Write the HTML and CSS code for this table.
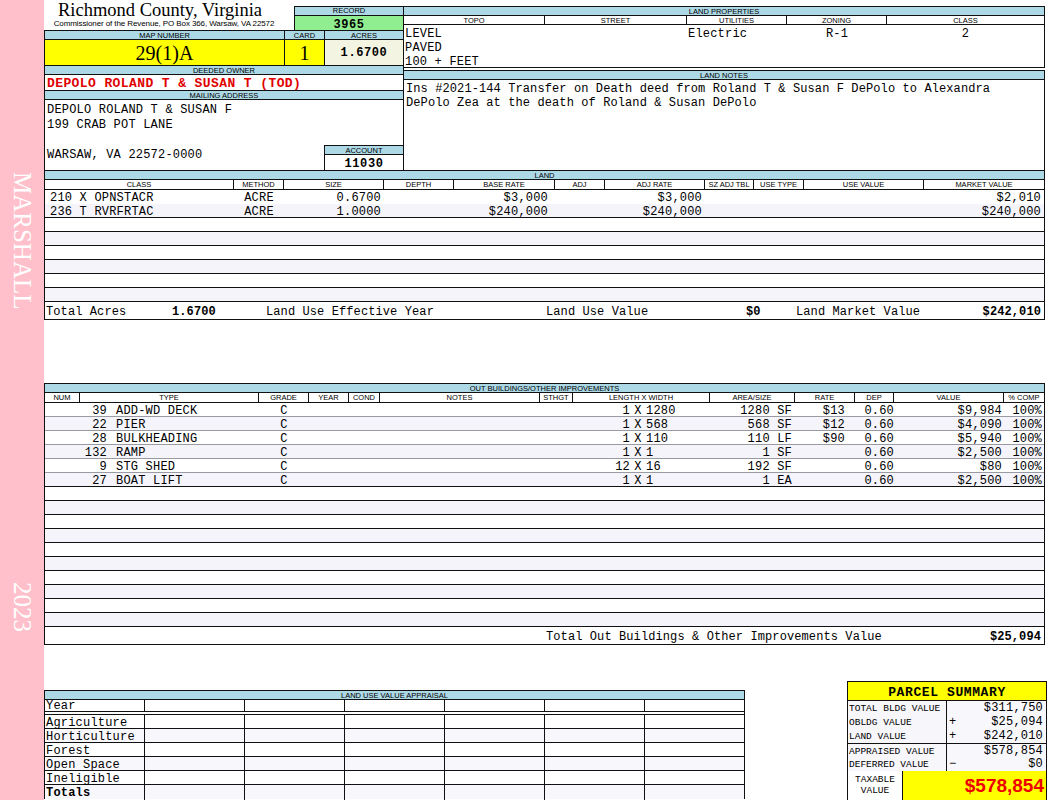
FILE: index.html
```html
<!DOCTYPE html>
<html>
<head>
<meta charset="utf-8">
<title>Richmond County, Virginia - Property Record</title>
<link rel="stylesheet" href="styles.css">
</head>
<body>
<div class="page">
  <aside class="side"><span class="side-name">MARSHALL</span><span class="side-year">2023</span></aside>
  <main class="main">
    <section class="top">
      <div class="tl">
        <div class="head">
          <div class="title-block">
            <div class="title">Richmond County, Virginia</div>
            <div class="subtitle">Commissioner of the Revenue, PO Box 366, Warsaw, VA 22572</div>
          </div>
          <div class="record">
            <div class="hdr">RECORD</div>
            <div class="record-val">3965</div>
          </div>
        </div>
        <div class="idgrid">
          <div class="hcell">MAP NUMBER</div>
          <div class="hcell">CARD</div>
          <div class="hcell last">ACRES</div>
          <div class="vcell mapnum">29(1)A</div>
          <div class="vcell card">1</div>
          <div class="vcell acres last">1.6700</div>
        </div>
        <div class="hdr boxed">DEEDED OWNER</div>
        <div class="owner">DEPOLO ROLAND T &amp; SUSAN T (TOD)</div>
        <div class="hdr boxed">MAILING ADDRESS</div>
        <div class="mail">
          <div class="mail-lines">DEPOLO ROLAND T &amp; SUSAN F<br>199 CRAB POT LANE<br>&nbsp;<br>WARSAW, VA 22572-0000</div>
          <div class="account">
            <div class="hdr">ACCOUNT</div>
            <div class="acct-val">11030</div>
          </div>
        </div>
      </div>
      <div class="tr">
        <div class="props">
          <div class="hdr">LAND PROPERTIES</div>
          <div class="pgrid pgrid-h"><span>TOPO</span><span>STREET</span><span>UTILITIES</span><span>ZONING</span><span>CLASS</span></div>
          <div class="pgrid pgrid-b"><span>LEVEL<br>PAVED<br>100 + FEET</span><span></span><span>Electric</span><span class="ctr">R-1</span><span class="ctr">2</span></div>
        </div>
        <div class="notes">
          <div class="hdr">LAND NOTES</div>
          <div class="notes-body">Ins #2021-144 Transfer on Death deed from Roland T &amp; Susan F DePolo to Alexandra DePolo Zea at the death of Roland &amp; Susan DePolo</div>
        </div>
      </div>
    </section>

    <section class="land">
      <div class="hdr">LAND</div>
      <div class="lgrid colh"><span>CLASS</span><span>METHOD</span><span>SIZE</span><span>DEPTH</span><span>BASE RATE</span><span>ADJ</span><span>ADJ RATE</span><span>SZ ADJ TBL</span><span>USE TYPE</span><span>USE VALUE</span><span>MARKET VALUE</span></div>
      <div class="lgrid lrow data"><span class="l">210 X OPNSTACR</span><span class="c">ACRE</span><span class="r p4">0.6700</span><span></span><span class="r p8">$3,000</span><span></span><span class="r p4">$3,000</span><span></span><span></span><span></span><span class="r p3">$2,010</span></div>
      <div class="lgrid lrow data alt lastdata"><span class="l">236 T RVRFRTAC</span><span class="c">ACRE</span><span class="r p4">1.0000</span><span></span><span class="r p8">$240,000</span><span></span><span class="r p4">$240,000</span><span></span><span></span><span></span><span class="r p3">$240,000</span></div>
      <div class="lrow"></div>
      <div class="lrow alt"></div>
      <div class="lrow"></div>
      <div class="lrow alt"></div>
      <div class="lrow"></div>
      <div class="lrow alt"></div>
      <div class="ltotal">
        <span>Total Acres</span><span class="b">1.6700</span><span>Land Use Effective Year</span><span>Land Use Value</span><span class="b">$0</span>
        <span class="split"><span>Land Market Value</span><span class="b">$242,010</span></span>
      </div>
    </section>

    <section class="outb">
      <div class="hdr">OUT BUILDINGS/OTHER IMPROVEMENTS</div>
      <div class="ogrid colh"><span>NUM</span><span>TYPE</span><span>GRADE</span><span>YEAR</span><span>COND</span><span>NOTES</span><span>STHGT</span><span>LENGTH X WIDTH</span><span>AREA/SIZE</span><span>RATE</span><span>DEP</span><span>VALUE</span><span>% COMP</span></div>
      <div class="ogrid orow data"><span class="nt"><span class="num">39</span>ADD-WD DECK</span><span class="c">C</span><span></span><span></span><span></span><span></span><span class="lw"><span class="len">1</span><span class="x">X</span>1280</span><span class="r ar">1280 SF</span><span class="r rt">$13</span><span class="r dp">0.60</span><span class="r vl">$9,984</span><span class="r pc">100%</span></div>
      <div class="ogrid orow data alt"><span class="nt"><span class="num">22</span>PIER</span><span class="c">C</span><span></span><span></span><span></span><span></span><span class="lw"><span class="len">1</span><span class="x">X</span>568</span><span class="r ar">568 SF</span><span class="r rt">$12</span><span class="r dp">0.60</span><span class="r vl">$4,090</span><span class="r pc">100%</span></div>
      <div class="ogrid orow data"><span class="nt"><span class="num">28</span>BULKHEADING</span><span class="c">C</span><span></span><span></span><span></span><span></span><span class="lw"><span class="len">1</span><span class="x">X</span>110</span><span class="r ar">110 LF</span><span class="r rt">$90</span><span class="r dp">0.60</span><span class="r vl">$5,940</span><span class="r pc">100%</span></div>
      <div class="ogrid orow data alt"><span class="nt"><span class="num">132</span>RAMP</span><span class="c">C</span><span></span><span></span><span></span><span></span><span class="lw"><span class="len">1</span><span class="x">X</span>1</span><span class="r ar">1 SF</span><span class="r rt"></span><span class="r dp">0.60</span><span class="r vl">$2,500</span><span class="r pc">100%</span></div>
      <div class="ogrid orow data"><span class="nt"><span class="num">9</span>STG SHED</span><span class="c">C</span><span></span><span></span><span></span><span></span><span class="lw"><span class="len">12</span><span class="x">X</span>16</span><span class="r ar">192 SF</span><span class="r rt"></span><span class="r dp">0.60</span><span class="r vl">$80</span><span class="r pc">100%</span></div>
      <div class="ogrid orow data alt lastdata"><span class="nt"><span class="num">27</span>BOAT LIFT</span><span class="c">C</span><span></span><span></span><span></span><span></span><span class="lw"><span class="len">1</span><span class="x">X</span>1</span><span class="r ar">1 EA</span><span class="r rt"></span><span class="r dp">0.60</span><span class="r vl">$2,500</span><span class="r pc">100%</span></div>
      <div class="orow"></div>
      <div class="orow alt"></div>
      <div class="orow"></div>
      <div class="orow alt"></div>
      <div class="orow"></div>
      <div class="orow alt"></div>
      <div class="orow"></div>
      <div class="orow alt"></div>
      <div class="orow"></div>
      <div class="orow alt"></div>
      <div class="ototal"><span></span><span class="split"><span>Total Out Buildings &amp; Other Improvements Value</span><span class="b">$25,094</span></span></div>
    </section>

    <section class="bottom">
      <div class="luv">
        <div class="hdr">LAND USE VALUE APPRAISAL</div>
        <div class="ugrid uyear"><span>Year</span><span></span><span></span><span></span><span></span><span></span><span></span></div>
        <div class="ubody">
          <div class="ugrid urow"><span>Agriculture</span><span></span><span></span><span></span><span></span><span></span><span></span></div>
          <div class="ugrid urow alt"><span>Horticulture</span><span></span><span></span><span></span><span></span><span></span><span></span></div>
          <div class="ugrid urow"><span>Forest</span><span></span><span></span><span></span><span></span><span></span><span></span></div>
          <div class="ugrid urow alt"><span>Open Space</span><span></span><span></span><span></span><span></span><span></span><span></span></div>
          <div class="ugrid urow"><span>Ineligible</span><span></span><span></span><span></span><span></span><span></span><span></span></div>
          <div class="ugrid urow alt tot"><span>Totals</span><span></span><span></span><span></span><span></span><span></span><span></span></div>
        </div>
      </div>
      <div class="summary">
        <div class="sum-title">PARCEL SUMMARY</div>
        <div class="srow"><span class="slbl">TOTAL BLDG VALUE</span><span class="sval"><span class="op"></span><span>$311,750</span></span></div>
        <div class="srow"><span class="slbl">OBLDG VALUE</span><span class="sval"><span class="op">+</span><span>$25,094</span></span></div>
        <div class="srow"><span class="slbl">LAND VALUE</span><span class="sval"><span class="op">+</span><span>$242,010</span></span></div>
        <div class="srow thick"><span class="slbl">APPRAISED VALUE</span><span class="sval"><span class="op"></span><span>$578,854</span></span></div>
        <div class="srow"><span class="slbl">DEFERRED VALUE</span><span class="sval"><span class="op">&minus;</span><span>$0</span></span></div>
        <div class="taxable"><span class="tax-lbl">TAXABLE<br>VALUE</span><span class="tax-val">$578,854</span></div>
      </div>
    </section>
  </main>
</div>
</body>
</html>
```
FILE: styles.css
```css
* { box-sizing: border-box; margin: 0; padding: 0; }
body {
  margin: 0;
  background: #fff;
  color: #000;
  font-family: "Liberation Mono", "DejaVu Sans Mono", monospace;
  font-size: 12px;
  letter-spacing: 0.2px;
}
.page { display: flex; width: 1050px; height: 800px; overflow: hidden; }

/* sidebar */
.side {
  flex: none;
  width: 44px;
  height: 800px;
  background: #ffc0cb;
  display: flex;
  flex-direction: column;
  align-items: center;
  padding-top: 172px;
  font-family: "Liberation Serif", "Times New Roman", serif;
  font-size: 25px;
  color: #fff;
  letter-spacing: 0;
}
.side span { writing-mode: vertical-rl; line-height: 25px; }
.side-year { margin-top: 272px; }

.main { flex: none; width: 1003px; }

/* header strips */
.hdr {
  height: 10px;
  background: #add8e6;
  border-top: 1px solid #111;
  border-bottom: 1px solid #111;
  font: 7.5px/9px "Liberation Sans", Arial, sans-serif;
  letter-spacing: 0;
  text-align: center;
  white-space: nowrap;
  overflow: hidden;
}
.boxed { border-left: 1px solid #111; border-right: 1px solid #111; }

/* top */
.top { display: flex; width: 1001px; height: 170px; }
.tl { width: 360px; display: flex; flex-direction: column; }
.head { display: flex; height: 30px; }
.title-block { width: 250px; text-align: center; padding: 1px 10px 0 0; }
.title { font: 18.5px/19px "Liberation Serif", "Times New Roman", serif; letter-spacing: 0; margin-right: 8px; }
.subtitle { font: 8px/8px "Liberation Sans", Arial, sans-serif; letter-spacing: -0.1px; white-space: nowrap; }
.record { width: 110px; margin-top: 6px; border: 1px solid #111; border-bottom: none; }
.record .hdr { border-top: none; height: 9px; line-height: 8px; }
.record-val { height: 14px; background: #90ee90; font-weight: bold; text-align: center; line-height: 14px; padding-top: 2px; letter-spacing: 0.6px; }

.idgrid { display: grid; grid-template-columns: 240px 40px 80px; }
.hcell {
  height: 10px;
  background: #add8e6;
  border-top: 1px solid #111;
  border-bottom: 1px solid #111;
  border-left: 1px solid #111;
  font: 7.5px/9px "Liberation Sans", Arial, sans-serif;
  letter-spacing: 0;
  text-align: center;
}
.last { border-right: 1px solid #111; }
.vcell { height: 25px; border-left: 1px solid #111; text-align: center; }
.mapnum, .card { background: #ffff00; font: 20px/26px "Liberation Serif", "Times New Roman", serif; letter-spacing: 0; }
.acres { background: #f4f4e2; font-weight: bold; line-height: 26px; letter-spacing: 0.6px; }

.owner {
  height: 15px;
  border-left: 1px solid #111;
  border-right: 1px solid #111;
  color: #e00000;
  font-weight: bold;
  font-size: 13px;
  line-height: 15px;
  letter-spacing: 0.4px;
  padding: 1px 0 0 2px;
  white-space: nowrap;
}
.mail {
  height: 70px;
  border-left: 1px solid #111;
  border-right: 1px solid #111;
  display: flex;
  align-items: flex-end;
}
.mail-lines { flex: 1; align-self: flex-start; padding: 3px 0 0 2px; line-height: 15px; }
.account { width: 79px; }
.account .hdr { border-left: 1px solid #111; }
.acct-val { height: 15px; border-left: 1px solid #111; font-weight: bold; text-align: center; line-height: 15px; padding-top: 2px; letter-spacing: 0.6px; }

.tr { width: 641px; }
.props { margin-top: 6px; border-right: 1px solid #111; }
.pgrid { display: grid; grid-template-columns: 141px 142px 100px 100px 1fr; }
.pgrid-h { height: 9px; border-bottom: 1px solid #111; }
.pgrid-h span {
  border-right: 1px solid #111;
  font: 7.5px/9px "Liberation Sans", Arial, sans-serif;
  letter-spacing: 0;
  text-align: center;
}
.pgrid-h span:last-child { border-right: none; }
.pgrid-b { height: 43px; border-bottom: 1px solid #111; line-height: 14px; padding-top: 2px; }
.pgrid-b span { padding-left: 1px; white-space: nowrap; }
.pgrid-b .ctr { text-align: center; padding-left: 0; }
.notes { margin-top: 2px; height: 100px; border-right: 1px solid #111; }
.notes-body { padding: 2px 30px 0 2px; line-height: 14px; letter-spacing: 0.1px; }

/* shared table pieces */
.colh { height: 10px; border-bottom: 1px solid #111; }
.colh span {
  border-right: 1px solid #111;
  font: 7.5px/9px "Liberation Sans", Arial, sans-serif;
  letter-spacing: 0;
  text-align: center;
  white-space: nowrap;
  overflow: hidden;
}
.colh span:last-child { border-right: none; }
.alt { background: #f4f4fa; }
.r { text-align: right; }
.c { text-align: center; }
.l { padding-left: 5px; white-space: pre; }
.b { font-weight: bold; }
.split { display: flex; justify-content: space-between; }

/* land */
.land { width: 1001px; border-left: 1px solid #111; border-right: 1px solid #111; }
.lgrid { display: grid; grid-template-columns: 189px 50px 100px 70px 101px 50px 100px 49px 50px 120px 1fr; }
.lrow { height: 14px; border-bottom: 1px solid #111; line-height: 13px; padding-top: 2px; white-space: nowrap; }
.lrow.data { border-bottom: none; }
.lrow.data.lastdata { border-bottom: 1px solid #111; }
.p3 { padding-right: 3px; }
.p4 { padding-right: 3px; }
.p8 { padding-right: 7px; }
.ltotal {
  display: grid;
  grid-template-columns: 126px 94px 280px 200px 50px 1fr;
  height: 18px;
  border-bottom: 1px solid #111;
  align-items: center;
  padding: 3px 3px 0 1px;
  white-space: nowrap;
  letter-spacing: 0.1px;
}

/* out buildings */
.outb { margin-top: 63px; width: 1001px; border-left: 1px solid #111; border-right: 1px solid #111; }
.ogrid { display: grid; grid-template-columns: 35px 179px 50px 40px 31px 160px 33px 137px 85px 60px 39px 110px 1fr; }
.orow { height: 14px; border-bottom: 1px solid #111; line-height: 13px; padding-top: 2px; white-space: nowrap; }
.orow.data { border-bottom: 1px solid #9a9aa4; }
.orow.data.lastdata { border-bottom: 1px solid #111; }
.nt { grid-column: 1 / 3; padding-left: 0; }
.num { display: inline-block; width: 62px; text-align: right; margin-right: 9px; }
.lw { white-space: nowrap; }
.len { display: inline-block; width: 57px; text-align: right; }
.x { display: inline-block; width: 16px; text-align: center; }
.ar { padding-right: 3px; }
.rt { padding-right: 10px; }
.dp { padding-right: 0; }
.vl { padding-right: 2px; }
.pc { padding-right: 2px; }
.ototal {
  display: grid;
  grid-template-columns: 501px 1fr;
  height: 18px;
  border-bottom: 1px solid #111;
  align-items: center;
  padding: 3px 3px 0 0;
  white-space: nowrap;
  letter-spacing: 0.1px;
}

/* bottom */
.bottom { display: flex; align-items: flex-start; width: 1003px; }
.luv { width: 701px; margin-top: 45px; border-left: 1px solid #111; border-right: 1px solid #111; }
.ugrid { display: grid; grid-template-columns: 100px repeat(6, 100px); }
.ugrid span { border-right: 1px solid #111; padding-left: 1px; white-space: nowrap; }
.ugrid span:last-child { border-right: none; }
.uyear { height: 12px; border-bottom: 1px solid #111; line-height: 11px; }
.uyear span { padding-top: 1px; }
.ubody { margin-top: 2px; border-top: 1px solid #111; }
.urow { height: 14px; border-bottom: 1px solid #111; line-height: 13px; }
.urow span { padding-top: 2px; }
.urow.alt { background: #f8f8fc; }
.urow.tot { border-bottom: none; }
.urow.tot span:first-child { font-weight: bold; }

.summary {
  width: 200px;
  height: 119px;
  margin-top: 36px;
  margin-left: auto;
  border: 1px solid #111;
  border-bottom: none;
}
.sum-title {
  height: 19px;
  background: #ffff00;
  border-bottom: 1px solid #111;
  text-align: center;
  font-weight: bold;
  font-size: 13px;
  line-height: 18px;
  padding-top: 2px;
  letter-spacing: 0.6px;
}
.srow { display: grid; grid-template-columns: 99px 1fr; height: 14px; border-bottom: 1px solid #111; }
.srow.thick { border-top: 2px solid #111; height: 15px; margin-top: -1px; }
.slbl {
  border-right: 1px solid #111;
  background: #f6f6fb;
  font-size: 9.5px;
  line-height: 13px;
  letter-spacing: 0;
  padding: 1px 0 0 1px;
  white-space: nowrap;
}
.sval { display: flex; justify-content: space-between; padding: 1px 3px 0 2px; line-height: 13px; background: #f8f8fc; }
.taxable { display: grid; grid-template-columns: 55px 1fr; height: 30px; }
.tax-lbl {
  border-right: 1px solid #111;
  font-size: 9.5px;
  line-height: 11px;
  letter-spacing: 0;
  text-align: center;
  padding-top: 3px;
}
.tax-val {
  background: #ffff00;
  color: #ee0000;
  font: bold 19px/30px "Liberation Sans", Arial, sans-serif;
  letter-spacing: 0;
  text-align: right;
  padding-right: 2px;
}
```
